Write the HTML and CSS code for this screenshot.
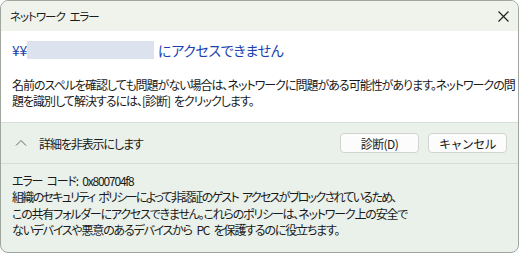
FILE: index.html
```html
<!DOCTYPE html>
<html lang="ja">
<head>
  <meta charset="UTF-8">
  <title>ネットワーク エラー</title>
  <link rel="stylesheet" href="styles.css">
</head>
<body>
  <div class="window">
    <div class="titlebar">
      <span class="title">ネットワーク エラー</span>
      <svg class="close" width="11" height="11" viewBox="0 0 11 11">
        <path d="M0.5 0.5 L10.5 10.5 M10.5 0.5 L0.5 10.5" stroke="#222" stroke-width="1.2" fill="none"/>
      </svg>
    </div>

    <div class="content">
      <div class="heading"><span>¥¥</span><span class="blur"></span><span>にアクセスできません</span></div>
      <div class="message">
        <div>名前のスペルを確認しても問題がない場合は、ネットワークに問題がある可能性があります。ネットワークの問</div>
        <div>題を識別して解決するには、[診断] をクリックします。</div>
      </div>
    </div>

    <div class="footer">
      <div class="toggle">
        <svg class="chevron" width="12" height="8" viewBox="0 0 12 8">
          <path d="M1 6.5 L6 1.5 L11 6.5" stroke="#666" stroke-width="1" fill="none"/>
        </svg>
        <span>詳細を非表示にします</span>
      </div>
      <div class="buttons">
        <button class="btn">診断(D)</button>
        <button class="btn">キャンセル</button>
      </div>
    </div>

    <div class="details">
      <div>エラー コード: 0x800704f8</div>
      <div class="dense">組織のセキュリティ ポリシーによって非認証のゲスト アクセスがブロックされているため、</div>
      <div>この共有フォルダーにアクセスできません。これらのポリシーは、ネットワーク上の安全で</div>
      <div>ないデバイスや悪意のあるデバイスから PC を保護するのに役立ちます。</div>
    </div>
  </div>
</body>
</html>
```

FILE: styles.css
```css
body {
  margin: 0;
  background-color: #ffffff;
  font-family: "Noto Sans CJK JP", "Noto Sans", sans-serif;
  font-feature-settings: "palt";
  color: #1a1a1a;
}

.window {
  width: 517px;
  height: 251px;
  border: 1px solid #9ea69e;
  border-radius: 8px;
  overflow: hidden;
  display: flex;
  flex-direction: column;
  background-color: #e9f1ea;
}

.titlebar {
  height: 30px;
  flex-shrink: 0;
  background-color: #eff3ec;
  display: flex;
  align-items: center;
  justify-content: space-between;
  padding: 0 9px 0 9px;
  font-size: 11.5px;
  letter-spacing: -1px;
  word-spacing: 3px;
}

.content {
  background-color: #ffffff;
  height: 91px;
  flex-shrink: 0;
  padding: 10px 11px 0 11px;
  box-sizing: border-box;
  white-space: nowrap;
}

.heading {
  display: flex;
  align-items: center;
  font-size: 14px;
  line-height: 18px;
  letter-spacing: -0.3px;
  color: #1b3fb0;
}

.blur {
  width: 127px;
  height: 18px;
  background-color: #dde3ee;
  margin: 0 4px 0 0;
}

.message {
  margin-top: 18px;
  font-size: 12px;
  line-height: 16px;
  letter-spacing: -1px;
  word-spacing: 2px;
}

.footer {
  height: 40px;
  flex-shrink: 0;
  border-top: 1px solid #d6ddd6;
  border-bottom: 1px solid #d6ddd6;
  display: flex;
  align-items: center;
  justify-content: space-between;
  padding: 0 11px 0 14px;
  font-size: 12px;
}

.toggle {
  display: flex;
  align-items: center;
  gap: 12px;
  letter-spacing: -1.1px;
}

.buttons {
  display: flex;
  gap: 9px;
}

.btn {
  width: 79px;
  height: 20px;
  background-color: #fbfcfb;
  border: 1px solid #d0d4d0;
  border-radius: 4px;
  font-family: inherit;
  font-size: 12px;
  letter-spacing: -0.6px;
  color: #1a1a1a;
  padding: 0;
}

.details {
  padding: 9px 11px 0 11px;
  font-size: 12px;
  line-height: 16.4px;
  letter-spacing: -1.2px;
  word-spacing: 3px;
  white-space: nowrap;
}

.details .dense {
  letter-spacing: -1.7px;
}
```
